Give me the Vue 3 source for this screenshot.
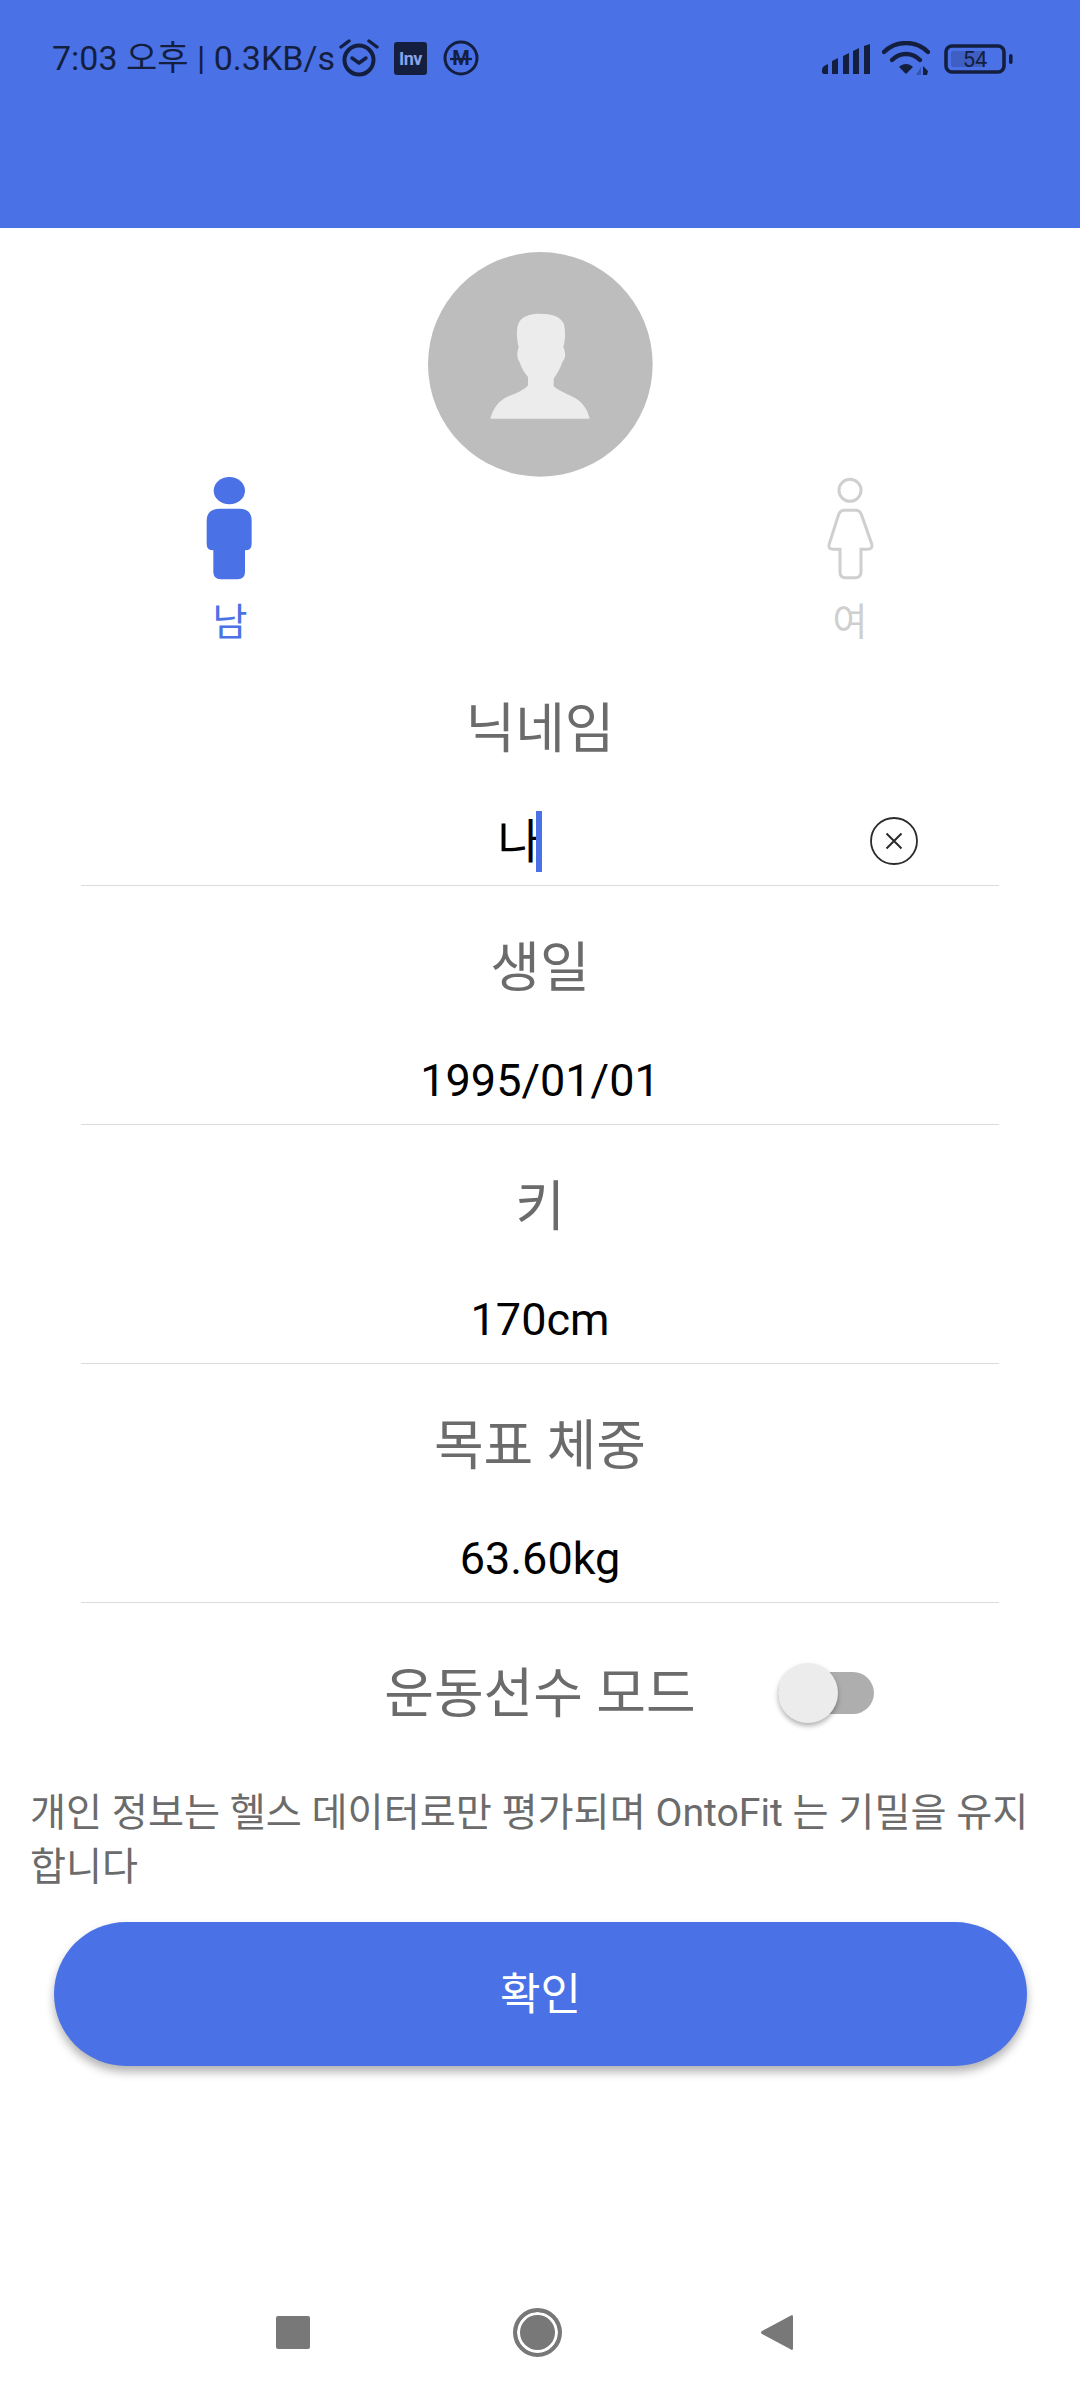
<template>
  <div class="page">
    <header class="top-bar">
      <div class="status-left">
        <span class="status-text">7:03 오후 | 0.3KB/s</span>
        <svg class="ic-alarm" width="40" height="40" viewBox="0 0 40 40" fill="none" stroke="#141f3f">
          <circle cx="20" cy="22" r="14.500" stroke-width="4" />
          <path d="M13 20l7 5 7-5" stroke-width="3.400" stroke-linecap="round" stroke-linejoin="round" />
          <path d="M2 9l8-6M38 9l-8-6" stroke-width="3.400" stroke-linecap="round" />
        </svg>
        <svg class="ic-inv" width="33" height="33" viewBox="0 0 33 33">
          <rect width="33" height="33" rx="3" fill="#141f3f" />
          <text x="16.500" y="23" text-anchor="middle" class="inv-text">Inv</text>
        </svg>
        <svg class="ic-m" width="36" height="36" viewBox="0 0 36 36" fill="none" stroke="#141f3f">
          <circle cx="18" cy="18" r="16" stroke-width="3" />
          <text x="18" y="25" text-anchor="middle" class="m-text">M</text>
          <path d="M7 19h22" stroke-width="2.200" />
        </svg>
      </div>
      <div class="status-right">
        <svg width="48" height="30" viewBox="0 0 48 30" fill="#141f3f">
          <path d="M0 26q0-4 6-6v10H2q-2 0-2-2zM10 17l6-3v16h-6zM21 12l6-3v21h-6zM31 7l6-3v26h-6zM42 2l6-2v30h-6z" />
        </svg>
        <svg class="ic-wifi" width="48" height="36" viewBox="0 0 48 36" fill="none" stroke="#141f3f">
          <path d="M2 11C14-1 34-1 46 11" stroke-width="4.400" stroke-linecap="round" />
          <path d="M10 19c8-8 20-8 28 0" stroke-width="4.400" stroke-linecap="round" />
          <path d="M17 26c4-4 10-4 14 0l-7 7z" fill="#141f3f" stroke="none" />
          <path d="M39 26v8h-5z" fill="#3557b0" stroke="none" />
          <path d="M41 25l5 5-1 4h-4z" fill="#141f3f" stroke="none" />
        </svg>
        <svg class="ic-batt" width="70" height="30" viewBox="0 0 70 30">
          <rect x="2" y="2" width="58" height="26" rx="6" fill="none" stroke="#141f3f" stroke-width="3.600" />
          <rect x="7" y="7" width="32" height="16" rx="2" fill="#3f5fc4" />
          <rect x="65" y="10" width="3.600" height="10" rx="1.800" fill="#141f3f" />
          <text x="31" y="23" text-anchor="middle" class="batt-text">54</text>
        </svg>
      </div>
    </header>

    <div class="avatar">
      <svg width="225" height="225" viewBox="85 65 675 675">
        <circle cx="422" cy="402" r="337" fill="#bdbdbd" />
        <path
          d="M272 565C282 530 298 512 322 500C345 490 372 482 385 465V440C372 425 364 410 360 395C351 385 351 368 357 350C350 325 350 295 356 280C366 256 395 250 420 250C455 250 485 258 493 282C498 305 497 330 491 350C499 368 498 385 488 395C482 415 472 430 462 445V468C478 482 505 492 530 505C550 517 565 540 570 565Z"
          fill="#ececec"
        />
      </svg>
    </div>

    <div class="gender-row">
      <div class="gender active">
        <svg width="120" height="110" viewBox="0 50 360 330" fill="#4a72e6">
          <ellipse cx="178" cy="91" rx="47" ry="41" />
          <path d="M150 145H208Q245 145 245 182V250Q245 270 225 270V335Q225 357 203 357H152Q130 357 130 335V270Q110 270 110 250V182Q110 145 150 145Z" />
        </svg>
        <span class="gender-label">남</span>
      </div>
      <div class="gender">
        <svg width="120" height="110" viewBox="0 50 360 330" fill="none" stroke="#cfcfcf" stroke-width="9">
          <circle cx="180" cy="90" r="33" />
          <path d="M162 150H198Q210 150 215 165L245 250Q250 267 232 267H213V335Q213 352 196 352H165Q150 352 150 335V267H130Q112 267 118 250L145 165Q150 150 162 150Z" />
        </svg>
        <span class="gender-label">여</span>
      </div>
    </div>

    <section class="field" v-for="field in fields" :key="field.title">
      <div class="field-title">{{ field.title }}</div>
      <div class="field-value">
        <span :class="{ typing: field.editing }">{{ field.value }}</span>
        <i v-if="field.editing" class="caret"></i>
        <svg v-if="field.editing" class="clear" width="48" height="48" viewBox="0 0 48 48" fill="none" stroke="#2b2b2b">
          <circle cx="24" cy="24" r="23" stroke-width="1.800" />
          <path d="M16.500 16.500l15 15M31.500 16.500l-15 15" stroke-width="2" />
        </svg>
      </div>
    </section>

    <div class="athlete-row">
      <span></span>
      <span class="athlete-label">운동선수 모드</span>
      <div class="toggle">
        <i class="toggle-knob"></i>
      </div>
    </div>

    <p class="notice">개인 정보는 헬스 데이터로만 평가되며 OntoFit 는 기밀을 유지합니다</p>

    <button class="confirm"><span>확인</span></button>

    <nav class="nav-bar">
      <i class="nav-square"></i>
      <i class="nav-home"></i>
      <svg class="nav-back" width="32" height="37" viewBox="0 0 32 37">
        <path d="M30 1.500Q32 0 32 3V34Q32 37 30 35.500L1 20Q-1 18.500 1 17Z" fill="#787878" />
      </svg>
    </nav>
  </div>
</template>

<script setup>
const fields = [
  { title: '닉네임', value: '나', editing: true },
  { title: '생일', value: '1995/01/01' },
  { title: '키', value: '170cm' },
  { title: '목표 체중', value: '63.60kg' },
]
</script>

<style>
html,
body {
  margin: 0;
  background: #fff;
}
</style>

<style scoped>
.page {
  width: 1080px;
  height: 2400px;
  display: flex;
  flex-direction: column;
  background: #fff;
  font-family: Roboto, "Noto Sans CJK KR", sans-serif;
  overflow: hidden;
}

.top-bar {
  height: 228px;
  box-sizing: border-box;
  background: #4a72e6;
  padding: 38px 66px 0 52px;
  display: flex;
  justify-content: space-between;
  align-items: flex-start;
  color: #141f3f;
}

.status-left,
.status-right {
  display: flex;
  align-items: center;
}

.status-text {
  font-size: 34px;
  line-height: 38px;
}

.ic-alarm {
  margin-left: 4px;
}

.ic-inv {
  margin-left: 15px;
}

.ic-m {
  margin-left: 16px;
}

.inv-text {
  font-family: Roboto, sans-serif;
  font-size: 18px;
  font-weight: 700;
  letter-spacing: -0.5px;
  fill: #8ba3e8;
}

.m-text {
  font-family: Roboto, sans-serif;
  font-size: 20px;
  font-weight: 700;
  fill: #141f3f;
  stroke: none;
}

.status-right {
  padding-top: 3px;
}

.ic-wifi {
  margin-left: 12px;
}

.ic-batt {
  margin-left: 14px;
}

.batt-text {
  font-family: Roboto, sans-serif;
  font-size: 22px;
  fill: #141f3f;
}

.avatar {
  margin-top: 24px;
  height: 225px;
  display: flex;
  justify-content: center;
}

.gender-row {
  display: flex;
  justify-content: space-between;
  padding: 0 170px 1px 170px;
}

.gender {
  width: 120px;
  display: flex;
  flex-direction: column;
  align-items: center;
  color: #cfcfcf;
}

.gender.active {
  color: #4a72e6;
}

.gender-label {
  margin-top: 11px;
  font-size: 38px;
  line-height: 48px;
}

.field {
  margin: 0 81px;
  height: 239px;
  box-sizing: border-box;
  padding-top: 53px;
  border-bottom: 1px solid #dcdcdc;
  text-align: center;
}

.field-title {
  font-size: 54px;
  line-height: 60px;
  color: #6b6b6b;
}

.field-value {
  position: relative;
  margin-top: 52px;
  font-size: 45px;
  line-height: 60px;
  color: #000;
}

.typing {
  padding-right: 42px;
  font-size: 47px;
}

.caret {
  position: absolute;
  left: 455px;
  top: -1px;
  width: 6px;
  height: 61px;
  background: #4a72e6;
}

.clear {
  position: absolute;
  left: 789px;
  top: 5px;
}

.athlete-row {
  margin-top: 60px;
  display: grid;
  grid-template-columns: 1fr auto 1fr;
  align-items: center;
  height: 60px;
}

.athlete-label {
  padding-top: 4px;
  font-size: 54px;
  line-height: 56px;
  color: #6b6b6b;
}

.toggle {
  position: relative;
  margin-left: 82px;
  width: 96px;
  height: 42px;
  border-radius: 21px;
  background: #aeaeae;
}

.toggle-knob {
  position: absolute;
  left: 0;
  top: -9px;
  width: 60px;
  height: 60px;
  border-radius: 50%;
  background: #ececec;
  box-shadow: 0 3px 5px rgba(0, 0, 0, 0.3);
}

.notice {
  margin: 63px 30px 0;
  font-size: 39.200px;
  line-height: 54px;
  color: #6b6b6b;
  word-break: break-all;
}

.confirm {
  margin: 28px 53px 0 54px;
  height: 144px;
  border: none;
  border-radius: 72px;
  background: #4a72e6;
  color: #fff;
  font-family: inherit;
  font-size: 44px;
  box-shadow: 0 6px 10px rgba(0, 0, 0, 0.3);
}

.confirm span {
  display: block;
  margin-top: -6px;
}

.nav-bar {
  margin-top: auto;
  padding: 0 0 43px 276px;
  height: 49px;
  display: flex;
  align-items: center;
}

.nav-square {
  width: 34px;
  height: 33px;
  border-radius: 2px;
  background: #787878;
}

.nav-home {
  margin-left: 203px;
  width: 49px;
  height: 49px;
  box-sizing: border-box;
  border: 4px solid #787878;
  border-radius: 50%;
  background: #787878;
  box-shadow: inset 0 0 0 3px #fff;
}

.nav-back {
  margin-left: 199px;
}
</style>
